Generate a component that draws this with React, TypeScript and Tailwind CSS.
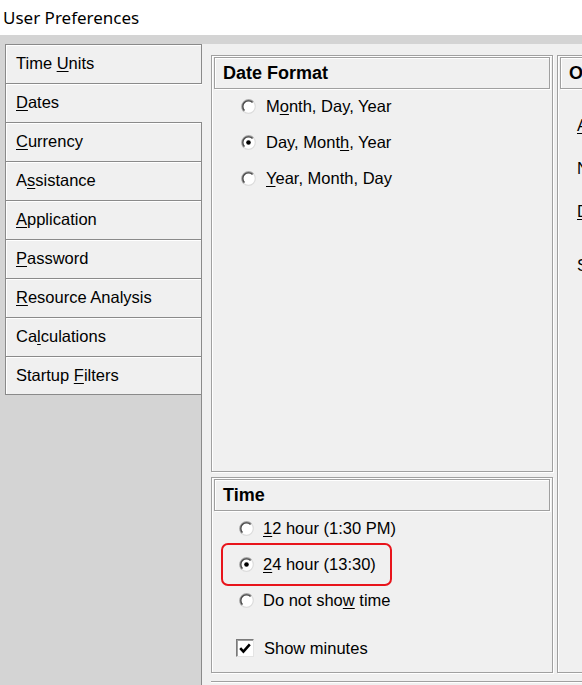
import React from 'react';

type Label = { pre: string; key?: string; post: string };

const tabs: Label[] = [
  { pre: 'Time ', key: 'U', post: 'nits' },
  { pre: '', key: 'D', post: 'ates' },
  { pre: '', key: 'C', post: 'urrency' },
  { pre: 'A', key: 's', post: 'sistance' },
  { pre: '', key: 'A', post: 'pplication' },
  { pre: '', key: 'P', post: 'assword' },
  { pre: '', key: 'R', post: 'esource Analysis' },
  { pre: 'Ca', key: 'l', post: 'culations' },
  { pre: 'Startup ', key: 'F', post: 'ilters' },
];

function Text({ l }: { l: Label }) {
  return (
    <span className="whitespace-pre">
      {l.pre}
      {l.key && <u className="underline decoration-1 underline-offset-[2px]">{l.key}</u>}
      {l.post}
    </span>
  );
}

function Radio({ checked }: { checked?: boolean }) {
  return (
    <svg width="15" height="15" viewBox="0 0 15 15" className="shrink-0">
      <circle cx="7.5" cy="7.5" r="6.8" fill="#fff" stroke="#dcdcdc" strokeWidth="1.2" />
      <path d="M2.7 12.3 A6.8 6.8 0 0 1 12.3 2.7" fill="none" stroke="#9a9a9a" strokeWidth="1.4" />
      <path d="M3.5 11.5 A5.6 5.6 0 0 1 11.5 3.5" fill="none" stroke="#444" strokeWidth="1.3" />
      {checked && <circle cx="7.5" cy="7.5" r="2.3" fill="#000" />}
    </svg>
  );
}

function GroupHeader({ title }: { title: string }) {
  return (
    <div className="mx-[2px] mt-[1px] h-[32px] shrink-0 flex items-center pl-[8px] border border-[#a0a0a0] shadow-[inset_1px_1px_0_#fff,1px_1px_0_#fff] text-[18px] font-bold whitespace-nowrap">
      {title}
    </div>
  );
}

export default function App() {
  return (
    <div className="w-[582px] h-[685px] overflow-hidden flex flex-col bg-white text-black text-[16.5px] font-['Liberation_Sans',Arial,sans-serif]">
      {/* Title */}
      <div className="h-[35px] shrink-0 flex items-center pl-[3px] text-[17px] font-['Noto_Sans',sans-serif]">
        User Preferences
      </div>

      <div className="flex-1 flex bg-[#d4d4d4] pt-[9px] min-h-0">
        {/* Tabs */}
        <div className="w-[202px] shrink-0 flex flex-col pl-[5px]">
          {tabs.map((t, i) => (
            <div
              key={i}
              className={`h-[39px] shrink-0 flex items-center pl-[10px] pb-[1px] bg-[#f0f0f0] border-l border-t border-[#8a8a8a] shadow-[inset_1px_1px_0_#fff] ${
                i === 1 ? 'mr-[-1px] border-r-0' : 'border-r'
              } ${i === tabs.length - 1 ? 'border-b' : ''}`}
            >
              <Text l={t} />
            </div>
          ))}
          <div className="flex-1 border-r border-[#8a8a8a]" />
        </div>

        {/* Panel */}
        <div className="flex-1 flex flex-col bg-[#f0f0f0] pl-[9px] pt-[11px] min-w-0">
          <div className="flex gap-[4px]">
            <div className="w-[342px] shrink-0 flex flex-col gap-[5px]">
              {/* Date Format */}
              <div className="h-[417px] flex flex-col border border-[#a0a0a0] shadow-[inset_1px_1px_0_#fff,1px_1px_0_#fff]">
                <GroupHeader title="Date Format" />
                <div className="flex flex-col pl-[29px] -mt-[1px]">
                  {[
                    { l: { pre: 'M', key: 'o', post: 'nth, Day, Year' }, c: false },
                    { l: { pre: 'Day, Mont', key: 'h', post: ', Year' }, c: true },
                    { l: { pre: '', key: 'Y', post: 'ear, Month, Day' }, c: false },
                  ].map((r, i) => (
                    <div key={i} className="h-[36px] flex items-center gap-[10px]">
                      <Radio checked={r.c} />
                      <Text l={r.l} />
                    </div>
                  ))}
                </div>
              </div>

              {/* Time */}
              <div className="h-[196px] flex flex-col border border-[#a0a0a0] shadow-[inset_1px_1px_0_#fff,1px_1px_0_#fff]">
                <GroupHeader title="Time" />
                <div className="relative flex flex-col pl-[27px] -mt-[1px]">
                  <div className="h-[36px] flex items-center gap-[9px]">
                    <Radio />
                    <Text l={{ pre: '', key: '1', post: '2 hour (1:30 PM)' }} />
                  </div>
                  <div className="relative h-[36px] flex items-center gap-[9px]">
                    <Radio checked />
                    <Text l={{ pre: '', key: '2', post: '4 hour (13:30)' }} />
                    <span className="absolute left-[-18px] top-[-3px] w-[171px] h-[43px] border-2 border-[#e8141b] rounded-[7px]" />
                  </div>
                  <div className="h-[36px] flex items-center gap-[9px]">
                    <Radio />
                    <Text l={{ pre: 'Do not sho', key: 'w', post: ' time' }} />
                  </div>
                  <div className="mt-[12px] h-[36px] flex items-center gap-[10px] ml-[-3px]">
                    <span className="w-[18px] h-[18px] shrink-0 flex items-center justify-center bg-white border border-t-[#7a7a7a] border-l-[#7a7a7a] border-r-[#e4e4e4] border-b-[#e4e4e4] shadow-[inset_1px_1px_0_#a0a0a0]">
                      <svg width="12" height="11" viewBox="0 0 12 11">
                        <path d="M1.2 5.2 L4.4 8.6 L10.8 1.4" fill="none" stroke="#000" strokeWidth="2.6" />
                      </svg>
                    </span>
                    <span>Show minutes</span>
                  </div>
                </div>
              </div>
            </div>

            {/* Right group (clipped at the window edge) */}
            <div className="w-[220px] shrink-0 h-[618px] flex flex-col border border-[#a0a0a0] shadow-[inset_1px_1px_0_#fff,1px_1px_0_#fff]">
              <GroupHeader title="Options" />
              <div className="flex flex-col pl-[19px] pt-[24px] gap-[18px] whitespace-nowrap">
                <Text l={{ pre: '', key: 'A', post: 'utomatic' }} />
                <span>Number of decimals</span>
                <Text l={{ pre: '', key: 'D', post: 'uration' }} />
                <span className="mt-[12px]">Show summary</span>
              </div>
            </div>
          </div>
          <div className="mt-[8px] h-[20px] border-t border-[#a0a0a0] shadow-[inset_0_1px_0_#fff]" />
        </div>
      </div>
    </div>
  );
}
